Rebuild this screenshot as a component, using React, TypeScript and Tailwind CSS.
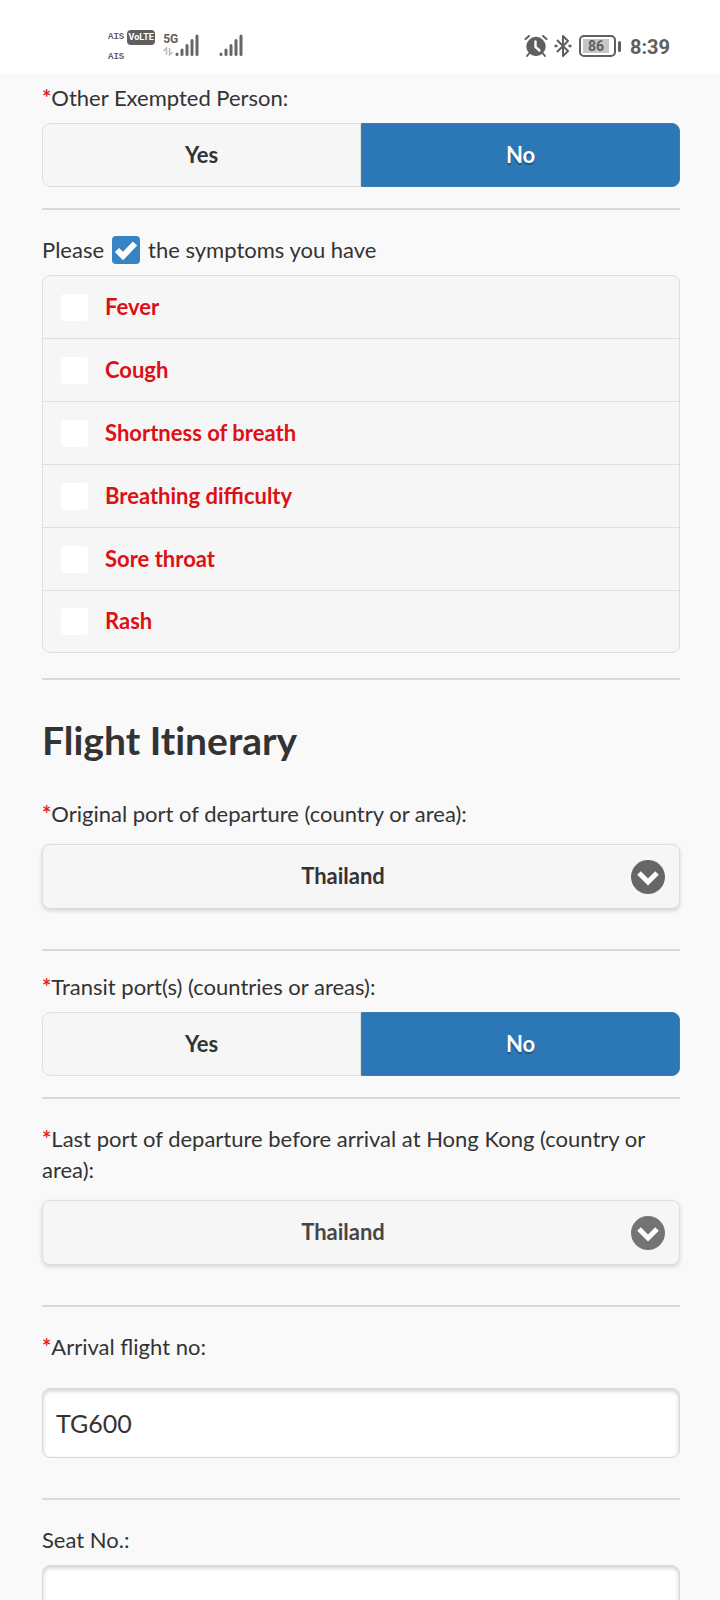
import { useState } from "react";
import type { ReactNode } from "react";

const symptoms = ["Fever", "Cough", "Shortness of breath", "Breathing difficulty", "Sore throat", "Rash"];

function Signal() {
  return (
    <svg viewBox="0 0 24 22" className="h-[22px] w-6" stroke="#666" strokeWidth="3" strokeLinecap="round" aria-hidden="true">
      <path d="M2 20v0.4M7 16v4.4M12 11.500v8.900M17 6.500v13.900M22 2v18.400" />
    </svg>
  );
}

function StatusBar() {
  return (
    <header className="flex h-[74px] items-start justify-between bg-white pr-[50px] pl-[108px] font-['Roboto',sans-serif] text-[#5f5f5f]">
      <div className="flex pt-[30px]">
        <div className="flex flex-col pt-[1px] font-['Liberation_Mono',monospace] text-[9px] leading-3 font-bold">
          <span className="pb-2">AIS</span>
          <span>AIS</span>
        </div>
        <span className="ml-[3px] flex h-[15px] w-7 items-center justify-center rounded-[4px] bg-[#5f5f5f] text-[9px] font-bold text-white">VoLTE</span>
        <div className="ml-2 flex w-3 flex-col pt-[3px] text-[12px] leading-3 font-bold">
          <span>5G</span>
          <svg viewBox="0 0 10 9" className="mt-[2px] h-[9px] w-[10px]" fill="none" stroke="#bbb" strokeWidth="1.5" aria-hidden="true">
            <path d="M0.500 4L3.500 1v7M9.500 5L6.500 8V1" />
          </svg>
        </div>
        <div className="flex gap-5 pt-1">
          <Signal />
          <Signal />
        </div>
      </div>
      <div className="flex items-center pt-[33px]">
        <svg viewBox="0 0 24 24" className="size-6" fill="none" stroke="#5f5f5f" strokeLinecap="round" aria-hidden="true">
          <circle cx="12" cy="12.500" r="9.700" fill="#5f5f5f" stroke="none" />
          <path d="M1.500 5L5 2M22.500 5L19 2M5 19.500L3 22M19 19.500l2 2.500" strokeWidth="2" />
          <path d="M11.500 7.500v5.500l4 3.500" stroke="#fff" strokeWidth="2.400" />
        </svg>
        <svg viewBox="0 0 18 24" className="ml-[6px] h-6 w-[18px]" fill="none" stroke="#5f5f5f" strokeWidth="2" strokeLinejoin="round" aria-hidden="true">
          <path d="M3 6l11 11-5 5V2l5 5L3 18" />
          <path d="M0.500 12h3M14.500 12h3" strokeWidth="2.500" />
        </svg>
        <div className="ml-[7px] flex h-[22px] w-[37px] rounded-[5px] border-2 border-[#5f5f5f] p-[2px]">
          <span className="flex w-[26px] items-center justify-center bg-[#c6c6c6] text-[14px] font-bold">86</span>
        </div>
        <span className="ml-[2px] h-[11px] w-[3px] rounded-sm bg-[#5f5f5f]" />
        <time className="ml-[9px] pt-[2px] text-[20px] leading-6 font-bold">8:39</time>
      </div>
    </header>
  );
}

function Rule() {
  return <hr className="h-[2px] border-0 bg-[#dadada]" />;
}

function Required() {
  return <span className="font-bold text-[#dc2626]">*</span>;
}

function YesNo({ name, legend }: { name: string; legend: ReactNode }) {
  const [value, setValue] = useState("No");
  return (
    <fieldset>
      <legend className="pb-[10px]">{legend}</legend>
      <div className="grid h-16 grid-cols-2">
        {["Yes", "No"].map((option) => (
          <label
            key={option}
            className="flex cursor-pointer items-center justify-center border border-[#dedede] bg-[#f6f6f6] pb-[2px] font-bold first:rounded-l-lg last:rounded-r-lg has-checked:border-[#3a7dae] has-checked:bg-[#2c77b5] has-checked:text-white has-checked:[text-shadow:0_2px_1px_#1d5480]"
          >
            <input type="radio" name={name} value={option} checked={value === option} onChange={() => setValue(option)} className="sr-only" />
            {option}
          </label>
        ))}
      </div>
    </fieldset>
  );
}

function PortSelect({ id, label, muted = false }: { id: string; label: string; muted?: boolean }) {
  return (
    <div className="flex flex-col gap-[15px]">
      <label htmlFor={id}>
        <Required />
        {label}
      </label>
      <div className={muted ? "relative opacity-90" : "relative"}>
        <select
          id={id}
          defaultValue="Thailand"
          className="block h-[65px] w-full appearance-none rounded-lg border border-[#dcdcdc] bg-[#f6f6f6] pr-9 pb-[2px] text-center font-bold shadow-[0_2px_4px_rgba(0,0,0,0.15)] [text-align-last:center]"
        >
          <option>Thailand</option>
          <option>Hong Kong</option>
          <option>Japan</option>
        </select>
        <svg viewBox="0 0 34 34" className="pointer-events-none absolute top-4 right-[15px] size-[34px]" aria-hidden="true">
          <circle cx="17" cy="17" r="17" fill="#666" />
          <path d="M8 13l9 9 9-9" fill="none" stroke="#fff" strokeWidth="5" />
        </svg>
      </div>
    </div>
  );
}

const inputStyle =
  "block h-[70px] w-full rounded-lg border border-[#d8d8d8] bg-white px-[13px] text-[25px] shadow-[inset_0_2px_4px_rgba(0,0,0,0.2)]";

export default function App() {
  return (
    <div className="min-h-screen bg-[#f9f9f9] font-['Lato',sans-serif] text-[22px] leading-[31px] text-[#333]">
      <StatusBar />
      <main className="flex flex-col pt-2 pr-10 pl-[42px]">
        <YesNo name="exempted" legend={<><Required />Other Exempted Person:</>} />
        <div className="pt-[21px] pb-6"><Rule /></div>

        <fieldset>
          <legend className="flex items-center pb-[10px]">
            Please
            <svg viewBox="0 0 28 28" className="mx-2 size-7" role="img" aria-label="tick">
              <rect width="28" height="28" rx="4" fill="#3784c5" />
              <path d="M5 14l6 6L23 7.500" fill="none" stroke="#fff" strokeWidth="6" />
            </svg>
            the symptoms you have
          </legend>
          <div className="divide-y divide-[#dedede] rounded-lg border border-[#dedede] bg-[#f6f6f6] font-bold text-[#dc1015]">
            {symptoms.map((symptom) => (
              <label key={symptom} className="flex h-[63px] items-center gap-[17px] pl-[18px] last:h-[61px]">
                <input
                  type="checkbox"
                  className="size-[27px] appearance-none rounded-[4px] bg-white checked:bg-[#3784c5]"
                />
                <span className="pb-[2px]">{symptom}</span>
              </label>
            ))}
          </div>
        </fieldset>
        <div className="pt-[25px] pb-[38px]"><Rule /></div>

        <h2 className="text-[39px] leading-[44px] font-bold [font-variant-ligatures:none]">Flight Itinerary</h2>
        <div className="pt-9">
          <PortSelect id="origin" label="Original port of departure (country or area):" />
        </div>
        <div className="pt-10 pb-5"><Rule /></div>

        <YesNo name="transit" legend={<><Required />Transit port(s) (countries or areas):</>} />
        <div className="pt-[21px] pb-6"><Rule /></div>

        <PortSelect id="last-port" label="Last port of departure before arrival at Hong Kong (country or area):" muted />
        <div className="pt-10 pb-6"><Rule /></div>

        <div className="flex flex-col gap-[26px]">
          <label htmlFor="flight"><Required />Arrival flight no:</label>
          <input id="flight" type="text" defaultValue="TG600" className={inputStyle} />
        </div>
        <div className="pt-10 pb-6"><Rule /></div>

        <div className="flex flex-col gap-[10px]">
          <label htmlFor="seat">Seat No.:</label>
          <input id="seat" type="text" className={inputStyle} />
        </div>
      </main>
    </div>
  );
}
